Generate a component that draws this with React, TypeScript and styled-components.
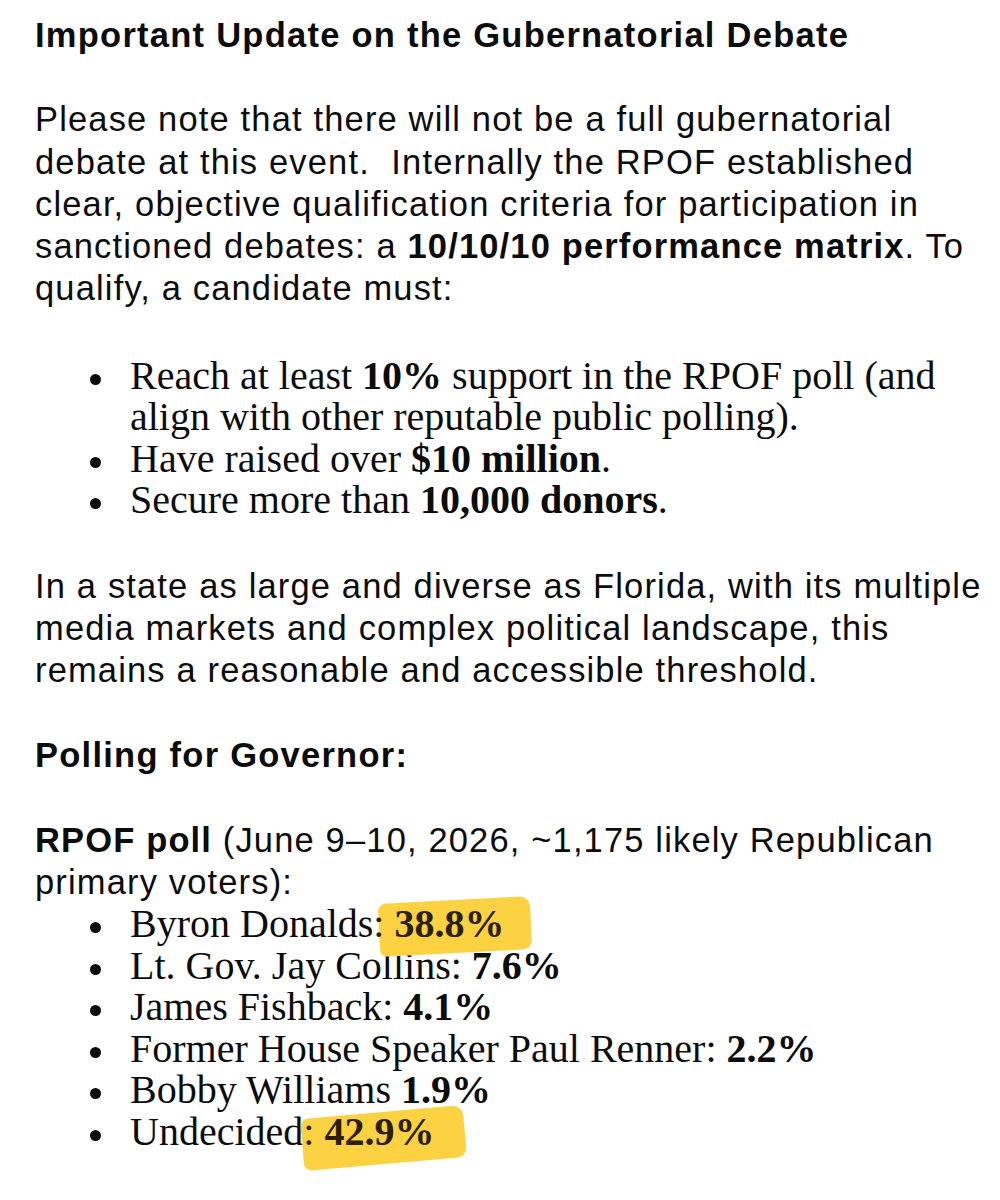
import styled, { createGlobalStyle } from "styled-components";

const GlobalStyle = createGlobalStyle`
  html, body {
    margin: 0;
    padding: 0;
    background: #ffffff;
  }
`;

const Page = styled.div`
  width: 1000px;
  min-height: 1200px;
  box-sizing: border-box;
  padding: 14px 0 0 35px;
  color: #0c0c0c;
  background: #ffffff;
  overflow: hidden;
`;

const Heading = styled.h2<{ $gap?: number }>`
  margin: 0 0 ${(p) => p.$gap ?? 42}px;
  font-family: "Liberation Sans", Arial, sans-serif;
  font-size: 34.5px;
  font-weight: 700;
  line-height: 42.3px;
  letter-spacing: 1.25px;
  white-space: nowrap;
`;

const Para = styled.p<{ $gap?: number }>`
  margin: 0 0 ${(p) => p.$gap ?? 45}px;
  font-family: "Liberation Sans", Arial, sans-serif;
  font-size: 34.5px;
  line-height: 42.3px;
  letter-spacing: 1.15px;
  white-space: nowrap;

  b {
    font-weight: 700;
  }
`;

const List = styled.ul<{ $gap?: number }>`
  margin: 0 0 ${(p) => p.$gap ?? 44}px;
  padding: 0 0 0 55px;
  list-style: none;
  font-family: "Liberation Serif", "Times New Roman", serif;
  font-size: 40px;
  line-height: 41.5px;
  white-space: nowrap;
`;

const Item = styled.li`
  display: flex;
  align-items: flex-start;
  column-gap: 29px;

  b {
    font-weight: 700;
  }
`;

const Dot = styled.span`
  flex: none;
  width: 11px;
  height: 11px;
  margin-top: 19px;
  border-radius: 50%;
  background: #0c0c0c;
`;

const Mark = styled.span<{
  $top: number;
  $right: number;
  $bottom: number;
  $left: number;
  $tilt: number;
}>`
  position: relative;
  isolation: isolate;
  color: #2a2104;

  &::before {
    content: "";
    position: absolute;
    top: ${(p) => p.$top}px;
    right: ${(p) => p.$right}px;
    bottom: ${(p) => p.$bottom}px;
    left: ${(p) => p.$left}px;
    z-index: -1;
    background: #fcd142;
    border-radius: 8px 10px 9px 7px;
    transform: rotate(${(p) => p.$tilt}deg);
    filter: blur(0.6px);
  }
`;

export default function App() {
  return (
    <>
      <GlobalStyle />
      <Page>
        <Heading>Important Update on the Gubernatorial Debate</Heading>

        <Para>
          Please note that there will not be a full gubernatorial
          <br />
          debate at this event.&nbsp; Internally the RPOF established
          <br />
          clear, objective qualification criteria for participation in
          <br />
          sanctioned debates: a <b>10/10/10 performance matrix</b>. To
          <br />
          qualify, a candidate must:
        </Para>

        <List>
          <Item>
            <Dot />
            <span>
              Reach at least <b>10%</b> support in the RPOF poll (and
              <br />
              align with other reputable public polling).
            </span>
          </Item>
          <Item>
            <Dot />
            <span>
              Have raised over <b>$10 million</b>.
            </span>
          </Item>
          <Item>
            <Dot />
            <span>
              Secure more than <b>10,000 donors</b>.
            </span>
          </Item>
        </List>

        <Para $gap={42}>
          In a state as large and diverse as Florida, with its multiple
          <br />
          media markets and complex political landscape, this
          <br />
          remains a reasonable and accessible threshold.
        </Para>

        <Heading $gap={42.7}>Polling for Governor:</Heading>

        <Para $gap={0}>
          <b>RPOF poll</b> (June 9–10, 2026, ~1,175 likely Republican
          <br />
          primary voters):
        </Para>

        <List $gap={0}>
          <Item>
            <Dot />
            <span>
              Byron Donalds
              <Mark $top={-1} $right={-27} $bottom={-7} $left={6} $tilt={-3}>
                : <b>38.8%</b>
              </Mark>
            </span>
          </Item>
          <Item>
            <Dot />
            <span>
              Lt. Gov. Jay Collins: <b>7.6%</b>
            </span>
          </Item>
          <Item>
            <Dot />
            <span>
              James Fishback: <b>4.1%</b>
            </span>
          </Item>
          <Item>
            <Dot />
            <span>
              Former House Speaker Paul Renner: <b>2.2%</b>
            </span>
          </Item>
          <Item>
            <Dot />
            <span>
              Bobby Williams <b>1.9%</b>
            </span>
          </Item>
          <Item>
            <Dot />
            <span>
              Undecided
              <Mark $top={3} $right={-31} $bottom={-10} $left={-1} $tilt={-5}>
                : <b>42.9%</b>
              </Mark>
            </span>
          </Item>
        </List>
      </Page>
    </>
  );
}
